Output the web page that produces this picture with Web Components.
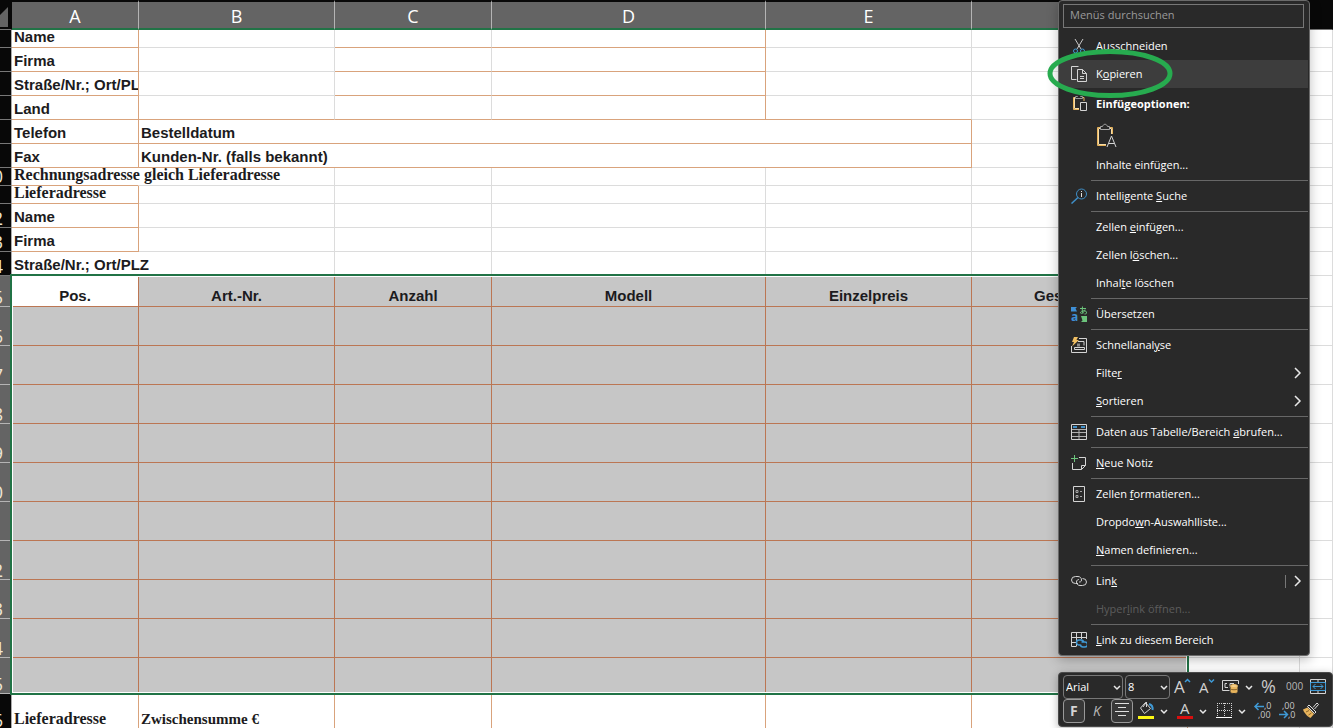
<!DOCTYPE html>
<html lang="de">
<head>
<meta charset="utf-8">
<title>Bestellformular</title>
<style>
    html, body {
        margin: 0;
        height: 100%;
        overflow: hidden;
        background: #fff;
    }
</style>
</head>
<body>
<order-app></order-app>

<script>
const UI_FONT = '"Segoe UI", "Open Sans", "Noto Sans", sans-serif'

const ICONS = {
    cut: `<path d="M4 1l6 10M12 1L6 11" stroke="#c8c8c8"/><circle cx="4.500" cy="13" r="2" stroke="#3f9ad6"/><circle cx="11.500" cy="13" r="2" stroke="#3f9ad6"/>`,
    copy: `<path d="M5.500 13.500H.5V.5h7M6.500 3.500h5l4 4v8h-9zM11.500 3.500v4h4M9 10.500h4M9 12.500h4" stroke="#d4d4d4"/>`,
    paste: `<path d="M5 1.500H2.500v12H8M11 1.500h2V5" stroke="#e8b45c"/><path d="M3.500 1.500v11H8" stroke="#f6dca8"/><path d="M4.500 2.500v-2h2c0-2 3-2 3 0h2v2z" stroke="#9a9a9a"/><path d="M9.500 6.500h6v8h-6z" stroke="#d4d4d4"/>`,
    search: `<circle cx="10.500" cy="6" r="5" stroke="#3f8fc8"/><path d="M7 9.500L.5 15.500" stroke="#3f8fc8" stroke-width="1.500"/><path d="M10.500 5v4M10.500 3v1" stroke="#e0e0e0"/>`,
    translate: `<path d="M0 1h6L4.500 2.500 6 5.500H0z" fill="#3f8fd6" stroke="none"/><path d="M10 10h6v6h-6l1.500-1.500z" fill="#6cc47c" stroke="none"/><text x="0" y="15" font-size="12" font-weight="bold" fill="#3f8fd6" stroke="none">a</text><path d="M9 2.500h6M11.500.5c-.5 3 0 5 .5 7M14 3.500c-1 3-3 4.500-4.500 3.500-.5-2 5-3.500 6-1 .5 1.500-.5 2-2 2" stroke="#6cc47c"/>`,
    analyse: `<path d="M8 1.500h7.500v14H.5V9" stroke="#d4d4d4"/><path d="M7 4.500h6v4M3.500 12.500v-2h10v2z" stroke="#d4d4d4"/><path d="M6 9.500v-3h3v3" fill="#8a8a8a" stroke="none"/><path d="M3 0h4L5.500 3H8L1 9.500 3 5H1z" fill="#f0bf62" stroke="none"/>`,
    table: `<path d="M.5.5h15v15H.5z" stroke="#d4d4d4"/><path d="M2 3h4M10 3h4" stroke="#3f8fc8" stroke-width="2"/><path d="M1 5.500h14M1 8.500h14M1 12.500h14M8 5.500V15" stroke="#b0b0b0"/>`,
    note: `<path d="M8 2.500h6.500v8l-4 4h-9V8" stroke="#d4d4d4"/><path d="M10.500 14.500v-4h4" stroke="#d4d4d4"/><path d="M3.500 0v7M0 3.500h7" stroke="#6cc47c"/>`,
    format: `<path d="M2.500.5h11v15h-11z" stroke="#d4d4d4"/><path d="M5 4.500h2v2H5zM5 9.500h2v2H5zM9 5.500h2M9 10.500h2" stroke="#a8a8a8"/>`,
    link: `<path d="M7 10.500H4.500a4 3.500 0 010-7H7c2 0 3.500 1.500 3.500 3.500S9 9 8 9M9 12.500h2.500a4 3.500 0 000-7M9 12.500c-2 0-3.500-1.500-3.500-3.500S7 6.500 8 6.500" stroke="#d4d4d4"/>`,
    range: `<path d="M15.500 7V.5H.5v14H5M.5 5.500h15M.5 10.500H5M5.500.5v14M10.500.5V7" stroke="#d4d4d4"/><path d="M9.500 13H8a2.500 2.500 0 010-5h2c1.500 0 2.500 1 2.500 2.500M10.500 10H14a2.500 2.500 0 010 5h-2c-1.500 0-2.500-1-2.500-2.500" stroke="#3f9ad6" stroke-width="1.500"/>`,
    chevron: `<path d="M5 3l5 5-5 5" stroke="#e8e8e8" stroke-width="1.500"/>`
}

const TOOL_ICONS = {
    grow: `<text x="2" y="18" font-size="17" fill="#d4d4d4">A</text><path d="M13 7l2.500-2.500L18 7" stroke="#3f9ad6" stroke-width="1.500"/>`,
    shrink: `<text x="3" y="18" font-size="15" fill="#d4d4d4">A</text><path d="M13 4.500L15.500 7 18 4.500" stroke="#3f9ad6" stroke-width="1.500"/>`,
    currency: `<path d="M10 15.500H2.500v-10h16V9M7 8.500H5v4h3M10 13V8.500h4M12 11h2" stroke="#d4d4d4"/><path d="M10 11v6c0 2 8 2 8 0v-6z" fill="#e8b45c" stroke="#292929"/><ellipse cx="14" cy="11" rx="3.500" ry="1.500" fill="#f6d28c" stroke="#e8b45c"/><path d="M10.500 14c1 1 6 1 7 0" stroke="#8a6428"/>`,
    percent: `<text x="2" y="18" font-size="18" fill="#c8c8c8">%</text>`,
    thousand: `<text x="3" y="15" font-size="10" fill="#b8b8b8">000</text>`,
    merge: `<path d="M3.500 4.500h15v14h-15zM11 4.500V8M11 15v3.500" stroke="#d4d4d4"/><path d="M3.500 7.500h15v8h-15z" stroke="#3f9ad6"/><path d="M6 11.500h10M8.500 9L6 11.500 8.500 14M13.500 9l2.500 2.500-2.500 2.500" stroke="#3f9ad6"/>`,
    bold: `<text x="7" y="17" font-size="14" font-weight="bold" fill="#d4d4d4">F</text>`,
    italic: `<text x="6" y="17" font-size="14" font-style="italic" fill="#b8b8b8">K</text>`,
    align: `<path d="M4 4.500h14M7 8.500h8M4 12.500h14M7 16.500h8" stroke="#e0e0e0"/>`,
    fill: `<path d="M10.500 3.500l5 6-6 5-4-5.500zM8 8l3.500-5v5" stroke="#d4d4d4"/><path d="M14 5c3 1 4 3 3.500 6" stroke="#3f9ad6" stroke-width="2"/><path d="M3 17h16v3H3z" fill="#fbf714"/>`,
    color: `<text x="6" y="15" font-size="15" fill="#d4d4d4">A</text><path d="M3 17h16v3H3z" fill="#d80f0f"/>`,
    borders: `<path d="M4 4.500h14M4 11.500h14M4.500 4v14M11.500 4v14M18.500 4v14" stroke="#d4d4d4" stroke-dasharray="1 1"/><path d="M3 18.500h16" stroke="#fff"/>`,
    decimalMore: `<path d="M3 7.500h9M6.500 4L3 7.500 6.500 11" stroke="#3f9ad6" stroke-width="1.500"/><text x="12" y="10" font-size="9" fill="#c8c8c8">,0</text><text x="6" y="19" font-size="9" fill="#c8c8c8">,00</text>`,
    decimalLess: `<text x="6" y="10" font-size="9" fill="#c8c8c8">,00</text><text x="12" y="19" font-size="9" fill="#c8c8c8">,0</text><path d="M3 15.500h8M8 12l3.500 3.500L8 19" stroke="#3f9ad6" stroke-width="1.500"/>`,
    brush: `<path d="M13 8.500l4-4.500 1.500 1.500-4 4.500" stroke="#e0e0e0"/><path d="M9 6l7 7-1.500 1.500-7-7z" fill="#292929" stroke="#e0e0e0"/><path d="M7.500 8.500L3 10.500c1 3 4 7 7.500 8.500l3.500-4z" fill="#e8b45c"/><path d="M6 13l3-1.500M8.500 16l3-2" stroke="#8a6428"/>`
}

class SheetGrid extends HTMLElement {
    constructor() {
        super()
        this.attachShadow({ mode: 'open' })
        this.shadowRoot.innerHTML = `
            <style>
                :host {
                    display: block;
                    --line: #dcdcdc;
                    --frame: #d9a37c;
                    --green: #217346;
                    color: #1c1b20;
                    font: bold 15px/14px "Liberation Sans", Arial, sans-serif;
                }

                table {
                    width: 100%;
                    table-layout: fixed;
                    border-collapse: separate;
                    border-spacing: 0;
                }

                th, td {
                    box-sizing: border-box;
                    padding: 0;
                    white-space: nowrap;
                }

                thead th {
                    height: 30px;
                    padding-top: 2px;
                    border-top: 2px solid #080808;
                    border-bottom: 2px solid var(--green);
                    border-right: 1px solid #b4b4b4;
                    background: #646464;
                    color: #fff;
                    font: 18px/24px ${UI_FONT};
                }

                thead th.idle {
                    background: #080808;
                    border-bottom: 1px solid #777;
                    border-right-color: #080808;
                }

                thead th svg {
                    display: block;
                    width: 8px;
                    height: 20px;
                }

                tbody th {
                    vertical-align: bottom;
                    background: #080808;
                    border-right: 1px solid #aaa;
                    border-bottom: 1px solid #777;
                    color: #efe6d4;
                    font: 18px/17px ${UI_FONT};
                }

                tbody th span {
                    display: flex;
                    justify-content: flex-end;
                    overflow: hidden;
                    width: 3px;
                }

                td {
                    vertical-align: bottom;
                    padding: 0 2px 3px;
                    border-right: 1px solid var(--line);
                    border-bottom: 1px solid var(--line);
                }

                .r { border-right-color: var(--frame); }
                .b { border-bottom-color: var(--frame); }
                .n { border-right-color: transparent; }
                .clip { overflow: hidden; }

                .serif {
                    font-family: "Liberation Serif", "Times New Roman", serif;
                    font-size: 16px;
                }

                .sum { font-size: 15px; }

                .h18 { height: 18px; }
                .h24 { height: 24px; }
                .h31 { height: 31px; }
                .h36 { height: 36px; }
                .h39 { height: 39px; }

                .selection { position: relative; }

                .selection::after {
                    content: "";
                    position: absolute;
                    box-sizing: border-box;
                    top: -2px;
                    bottom: -1px;
                    left: 10px;
                    width: 1179px;
                    border: 2px solid var(--green);
                    box-shadow: inset 0 0 0 1px #fff;
                }

                .selection th {
                    background: #646464;
                    border-bottom-color: #b4b4b4;
                }

                .selection td.s {
                    --frame: #bb7653;
                    background: #c6c6c6;
                    text-align: center;
                }

                .selection td.active { background: #fff; }
            </style>
            <table>
                <colgroup>
                    <col style="width:12px"><col style="width:127px"><col style="width:196px">
                    <col style="width:157px"><col style="width:274px"><col style="width:206px">
                    <col style="width:216px"><col style="width:112px"><col>
                </colgroup>
                <thead>
                    <tr>
                        <th class="idle"><svg viewBox="0 0 8 20"><path d="M8 0v20H0V8z" fill="#646464"/></svg></th>
                        <th>A</th><th>B</th><th>C</th><th>D</th><th>E</th><th></th>
                        <th class="idle"></th><th class="idle"></th>
                    </tr>
                </thead>
                ${this.renderRows()}
            </table>
        `
    }

    // a cell is [text, classes, colspan]
    renderRow(number, height, cells) {
        const tds = cells.map(([text = '', cls = '', span = 1]) => `<td class="${cls}" colspan="${span}">${text}</td>`).join('')
        return `<tr class="h${height}"><th><span>${number}</span></th>${tds}</tr>`
    }

    renderRows() {
        const e = ['']
        const address = (text, cls, last) => [[text, `r b ${cls}`], ['', last ? 'b' : ''], ['', 'b'], ['', 'r b'], ['', last ? 'b' : ''], e, e, e]
        const merged = (label, text) => [[label, 'r b'], [text, 'r b', 4], e, e, e]
        const plain = (text, cls) => [[text, cls], e, e, e, e, e, e, e]
        const items = ['Pos.', 'Art.-Nr.', 'Anzahl', 'Modell', 'Einzelpreis', 'Gesamtpreis']

        let html = '<tbody>'
        html += this.renderRow('', 18, address('Name', ''))
        html += this.renderRow('', 24, address('Firma', ''))
        html += this.renderRow('', 24, address('Straße/Nr.; Ort/PLZ', 'clip'))
        html += this.renderRow('', 24, address('Land', '', true))
        html += this.renderRow('', 24, merged('Telefon', 'Bestelldatum'))
        html += this.renderRow('', 24, merged('Fax', 'Kunden-Nr. (falls bekannt)'))
        html += this.renderRow(10, 18, plain('Rechnungsadresse gleich Lieferadresse', 'serif b n'))
        html += this.renderRow(11, 18, plain('Lieferadresse', 'serif r b'))
        html += this.renderRow(12, 24, plain('Name', 'r b'))
        html += this.renderRow(13, 24, plain('Firma', 'r b'))
        html += this.renderRow(14, 24, plain('Straße/Nr.; Ort/PLZ', 'n'))
        html += '</tbody><tbody class="selection">'
        html += this.renderRow(15, 31, [...items.map((t, i) => [t, i ? 's r b' : 's r b active']), e, e])
        for (let n = 16; n <= 25; n++) {
            html += this.renderRow(n, n === 25 ? 36 : 39, [...items.map(() => ['', 's r b']), e, e])
        }
        html += '</tbody><tbody>'
        html += this.renderRow(26, 36, [['Lieferadresse', 'serif r'], ['Zwischensumme €', 'serif sum r'], ['', 'r'], ['', 'r'], ['', 'r'], ['', 'r'], e, e])
        return html + '</tbody>'
    }
}

class MenuItem extends HTMLElement {
    constructor() {
        super()
        this.attachShadow({ mode: 'open' })
        const icon = this.getAttribute('icon')
        const arrow = this.hasAttribute('arrow')
        this.shadowRoot.innerHTML = `
            <style>
                :host { display: block; }

                button {
                    display: flex;
                    align-items: center;
                    gap: 9px;
                    width: 100%;
                    height: 28px;
                    padding: 0 2px 0 12px;
                    border: 0;
                    background: none;
                    color: inherit;
                    font: inherit;
                    text-align: left;
                    white-space: nowrap;
                }

                :host([hot]) button, button:hover:enabled { background: #3d3d3d; }
                :host([heading]) button { height: 32px; font-weight: bold; }
                button:disabled { color: #5c5c5c; }

                svg {
                    flex: none;
                    width: 16px;
                    height: 16px;
                    fill: none;
                }

                .label { flex: 1; }

                .split {
                    width: 1px;
                    height: 13px;
                    background: #777;
                    margin-right: -5px;
                }
            </style>
            <button type="button" ${this.hasAttribute('disabled') ? 'disabled' : ''}>
                <svg viewBox="0 0 16 16">${ICONS[icon] || ''}</svg>
                <span class="label"><slot></slot></span>
                ${this.hasAttribute('split') ? '<span class="split"></span>' : ''}
                ${arrow ? `<svg viewBox="0 0 16 16">${ICONS.chevron}</svg>` : ''}
            </button>
        `
    }
}

class MenuSeparator extends HTMLElement {
    constructor() {
        super()
        this.attachShadow({ mode: 'open' })
        this.shadowRoot.innerHTML = `
            <style>
                :host {
                    display: block;
                    height: 1px;
                    margin: 1px 0 1px 32px;
                    background: #676767;
                }
            </style>
        `
    }
}

class ContextMenu extends HTMLElement {
    constructor() {
        super()
        this.attachShadow({ mode: 'open' })
        this.shadowRoot.innerHTML = `
            <style>
                :host {
                    display: block;
                    box-sizing: border-box;
                    width: 252px;
                    padding: 3px 1px 1px 0;
                    border: 1px solid #6a6a6a;
                    border-radius: 4px;
                    background: #292929;
                    color: #fff;
                    box-shadow: 0 4px 12px rgba(0, 0, 0, 0.25);
                    font: 11px/16px ${UI_FONT};
                }

                input {
                    display: block;
                    box-sizing: border-box;
                    width: 241px;
                    height: 24px;
                    margin: 0 4px 4px;
                    padding: 0 6px 3px;
                    border: 1px solid #777;
                    background: none;
                    color: inherit;
                    font: inherit;
                }

                input::placeholder { color: #9a9a9a; }

                .paste {
                    display: block;
                    width: 28px;
                    height: 31px;
                    margin-left: 34px;
                    padding: 0;
                    border: 0;
                    background: none;
                    font: inherit;
                }

                .paste svg {
                    display: block;
                    margin: 0 3px;
                    width: 22px;
                    height: 26px;
                    fill: none;
                }
            </style>
            <input type="text" placeholder="Menüs durchsuchen" aria-label="Menüs durchsuchen">
            <menu-item icon="cut"><u>A</u>usschneiden</menu-item>
            <menu-item icon="copy" hot>K<u>o</u>pieren</menu-item>
            <menu-item icon="paste" heading>Einfügeoptionen:</menu-item>
            <button class="paste" type="button" aria-label="Einfügen">
                <svg viewBox="0 0 22 26">
                    <path d="M5 4.500H1.500v18h8.500M13 4.500h3.500V11" stroke="#e8b45c"/>
                    <path d="M5 5.500H2.500v16H10M13 5.500h2.500V11" stroke="#f6dca8"/>
                    <path d="M4.500 6.500v-3h2c1-3 4-3 5 0h2v3z" stroke="#a8a8a8"/>
                    <path d="M11 24L15.500 13 20 24M13 20.500h5" stroke="#d4d4d4"/>
                </svg>
            </button>
            <menu-item>Inhalte einfügen...</menu-item>
            <menu-separator></menu-separator>
            <menu-item icon="search">Intelligente <u>S</u>uche</menu-item>
            <menu-separator></menu-separator>
            <menu-item>Zellen <u>e</u>infügen...</menu-item>
            <menu-item>Zellen l<u>ö</u>schen...</menu-item>
            <menu-item>Inhal<u>t</u>e löschen</menu-item>
            <menu-separator></menu-separator>
            <menu-item icon="translate">Übersetzen</menu-item>
            <menu-separator></menu-separator>
            <menu-item icon="analyse">Schnellanal<u>y</u>se</menu-item>
            <menu-item arrow>Filte<u>r</u></menu-item>
            <menu-item arrow><u>S</u>ortieren</menu-item>
            <menu-separator></menu-separator>
            <menu-item icon="table">Daten aus Tabelle/Bereich <u>a</u>brufen...</menu-item>
            <menu-separator></menu-separator>
            <menu-item icon="note"><u>N</u>eue Notiz</menu-item>
            <menu-separator></menu-separator>
            <menu-item icon="format">Zellen <u>f</u>ormatieren...</menu-item>
            <menu-item>Dropdo<u>w</u>n-Auswahlliste...</menu-item>
            <menu-item><u>N</u>amen definieren...</menu-item>
            <menu-separator></menu-separator>
            <menu-item icon="link" split arrow>Lin<u>k</u></menu-item>
            <menu-item disabled>Hyper<u>l</u>ink öffnen...</menu-item>
            <menu-separator></menu-separator>
            <menu-item icon="range"><u>L</u>ink zu diesem Bereich</menu-item>
        `
    }
}

class ToolButton extends HTMLElement {
    constructor() {
        super()
        this.attachShadow({ mode: 'open' })
        this.shadowRoot.innerHTML = `
            <style>
                :host { display: flex; }

                button {
                    box-sizing: border-box;
                    height: 24px;
                    padding: 0;
                    border: 1px solid transparent;
                    border-radius: 4px;
                    background: none;
                    font: inherit;
                }

                .main { width: 22px; }
                .drop { width: 15px; }
                :host([pressed]) .main { border-color: #999; background: #383838; }

                svg {
                    display: block;
                    margin: -1px;
                    height: 24px;
                    fill: none;
                    overflow: visible;
                }

                .main svg { width: 22px; }
                .drop svg { width: 15px; }
            </style>
            <button class="main" type="button" aria-label="${this.getAttribute('label')}">
                <svg viewBox="0 0 22 24">${TOOL_ICONS[this.getAttribute('icon')]}</svg>
            </button>
            ${this.hasAttribute('drop') ? `
                <button class="drop" type="button" aria-label="${this.getAttribute('label')}: Optionen">
                    <svg viewBox="0 0 15 24"><path d="M4 11l3 3 3-3" stroke="#e8e8e8" stroke-width="1.500"/></svg>
                </button>` : ''}
        `
    }
}

class ToolSelect extends HTMLElement {
    constructor() {
        super()
        this.attachShadow({ mode: 'open' })
        this.shadowRoot.innerHTML = `
            <style>
                :host {
                    display: grid;
                    align-items: center;
                }

                select, svg { grid-area: 1 / 1; }

                select {
                    appearance: none;
                    box-sizing: border-box;
                    width: 100%;
                    height: 24px;
                    padding: 0 2px;
                    border: 1px solid #777;
                    border-radius: 4px;
                    background: none;
                    color: #fff;
                    font: inherit;
                }

                svg {
                    justify-self: end;
                    width: 12px;
                    height: 12px;
                    fill: none;
                    pointer-events: none;
                }
            </style>
            <select aria-label="${this.getAttribute('label')}"><option>${this.getAttribute('value')}</option></select>
            <svg viewBox="0 0 12 12"><path d="M3 5l3 3 3-3" stroke="#e8e8e8" stroke-width="1.500"/></svg>
        `
    }
}

class MiniToolbar extends HTMLElement {
    constructor() {
        super()
        this.attachShadow({ mode: 'open' })
        this.shadowRoot.innerHTML = `
            <style>
                :host {
                    display: block;
                    box-sizing: border-box;
                    width: 275px;
                    padding: 2px 1px 3px 4px;
                    border: 1px solid #4a4a4a;
                    border-radius: 4px;
                    background: #292929;
                    box-shadow: 0 2px 8px rgba(0, 0, 0, 0.3);
                    font: 11px/16px ${UI_FONT};
                }

                .row {
                    display: flex;
                    gap: 2px;
                }

                .family { width: 60px; }
                .size { width: 45px; }
            </style>
            <div class="row">
                <tool-select class="family" label="Schriftart" value="Arial"></tool-select>
                <tool-select class="size" label="Schriftgrad" value="8"></tool-select>
                <tool-button icon="grow" label="Schriftgrad vergrößern"></tool-button>
                <tool-button icon="shrink" label="Schriftgrad verkleinern"></tool-button>
                <tool-button icon="currency" label="Buchhaltungszahlenformat" drop></tool-button>
                <tool-button icon="percent" label="Prozentformat"></tool-button>
                <tool-button icon="thousand" label="Tausendertrennzeichen"></tool-button>
                <tool-button icon="merge" label="Verbinden und zentrieren"></tool-button>
            </div>
            <div class="row">
                <tool-button icon="bold" label="Fett" pressed></tool-button>
                <tool-button icon="italic" label="Kursiv"></tool-button>
                <tool-button icon="align" label="Zentriert" pressed></tool-button>
                <tool-button icon="fill" label="Füllfarbe" drop></tool-button>
                <tool-button icon="color" label="Schriftfarbe" drop></tool-button>
                <tool-button icon="borders" label="Rahmen" drop></tool-button>
                <tool-button icon="decimalMore" label="Dezimalstelle hinzufügen"></tool-button>
                <tool-button icon="decimalLess" label="Dezimalstelle entfernen"></tool-button>
                <tool-button icon="brush" label="Format übertragen"></tool-button>
            </div>
        `
    }
}

class OrderApp extends HTMLElement {
    constructor() {
        super()
        this.attachShadow({ mode: 'open' })
        this.shadowRoot.innerHTML = `
            <style>
                :host {
                    display: block;
                    position: relative;
                    height: 100vh;
                    overflow: hidden;
                }

                context-menu, mini-toolbar {
                    position: absolute;
                    left: 1058px;
                }

                context-menu { top: 0; }
                mini-toolbar { top: 672px; }

                .ring {
                    position: absolute;
                    left: 1047px;
                    top: 49px;
                    width: 126px;
                    height: 49px;
                    fill: none;
                    pointer-events: none;
                }
            </style>
            <sheet-grid></sheet-grid>
            <context-menu></context-menu>
            <mini-toolbar></mini-toolbar>
            <svg class="ring" viewBox="0 0 126 49"><ellipse cx="63" cy="24.500" rx="60" ry="22" stroke="#27ab4f" stroke-width="5"/></svg>
        `
    }
}

customElements.define('sheet-grid', SheetGrid)
customElements.define('menu-item', MenuItem)
customElements.define('menu-separator', MenuSeparator)
customElements.define('context-menu', ContextMenu)
customElements.define('tool-button', ToolButton)
customElements.define('tool-select', ToolSelect)
customElements.define('mini-toolbar', MiniToolbar)
customElements.define('order-app', OrderApp)
</script>
</body>
</html>
